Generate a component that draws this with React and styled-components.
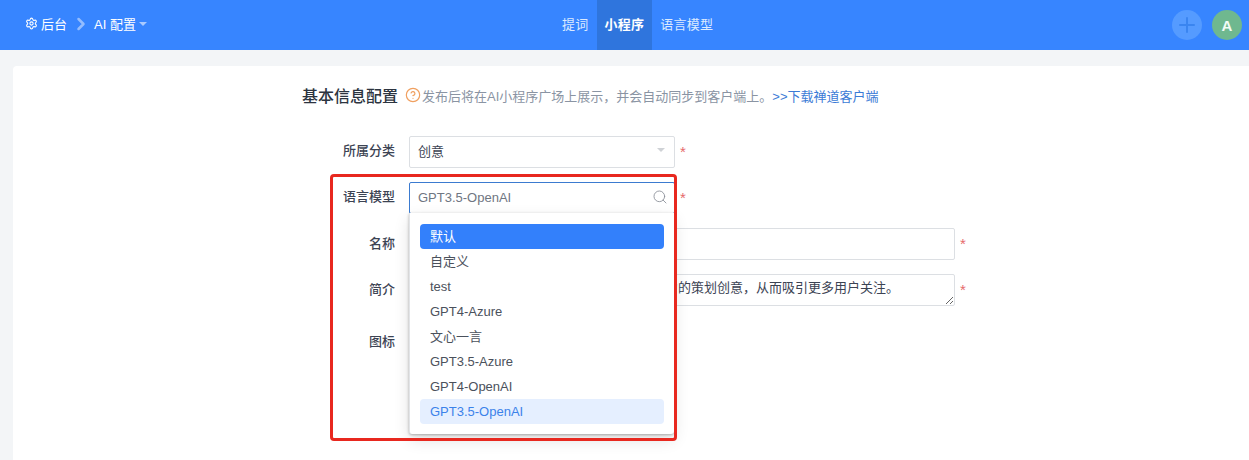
import React from "react";
import styled, { createGlobalStyle } from "styled-components";
import { Settings, ChevronRight, Plus, Search, CircleHelp } from "lucide-react";

const GlobalStyle = createGlobalStyle`
  html, body {
    margin: 0;
    padding: 0;
    height: 460px;
    overflow: hidden;
    background: #f3f5f7;
    font-family: "Liberation Sans", "Noto Sans CJK SC", sans-serif;
    font-size: 13px;
    color: #3c4353;
  }
  * { box-sizing: border-box; }
`;

const Page = styled.div`
  width: 1249px;
  height: 460px;
  overflow: hidden;
`;

const Header = styled.header`
  height: 50px;
  background: #3785ff;
  display: flex;
  align-items: stretch;
  color: #fff;
  padding: 0 7px 0 25px;
`;

const Crumbs = styled.div`
  flex: 0 0 529px;
  display: flex;
  align-items: center;
  padding-bottom: 3px;
  font-size: 13px;
`;

const Crumb = styled.span`
  display: flex;
  align-items: center;
  gap: 3px;
`;

const CrumbSep = styled.span`
  display: flex;
  margin: 0 3px 0 4px;
  color: #94bdff;
`;

const Caret = styled.i`
  display: inline-block;
  border-left: 4px solid transparent;
  border-right: 4px solid transparent;
  border-top: 4px solid #a9caff;
`;

const Nav = styled.nav`
  display: flex;
  align-items: stretch;
  flex: 1;
`;

const NavItem = styled.a`
  display: flex;
  align-items: center;
  padding: 0 8px 3px;
  letter-spacing: 0.25px;
  font-weight: ${(p) => (p.$active ? 700 : 400)};
  color: ${(p) => (p.$active ? "#fff" : "#dceaff")};
  background: ${(p) => (p.$active ? "#2f75dd" : "transparent")};
`;

const Actions = styled.div`
  display: flex;
  align-items: center;
  gap: 10px;
`;

const RoundButton = styled.span`
  width: 30px;
  height: 30px;
  border-radius: 50%;
  display: flex;
  align-items: center;
  justify-content: center;
  background: ${(p) => p.$bg};
  color: ${(p) => p.$color};
  font-size: 15px;
  font-weight: 700;
`;

const Card = styled.main`
  margin: 16px 0 0 13px;
  width: 1300px;
  height: 420px;
  background: #fff;
  border-radius: 4px;
  padding: 20px 0 0 289px;
`;

const TitleRow = styled.div`
  display: flex;
  align-items: center;
  height: 20px;
  margin-bottom: 30px;
`;

const Title = styled.h2`
  margin: 2px 7px 0 0;
  font-size: 16px;
  line-height: 20px;
  font-weight: 500;
  color: #2c3440;
`;

const Hint = styled.span`
  display: flex;
  align-items: center;
  gap: 1px;
  padding-bottom: 2px;
  color: #8a94a3;
`;

const HintLink = styled.a`
  margin-left: -1px;
  color: #3b7bd6;
`;

const Form = styled.div`
  display: flex;
  flex-direction: column;
  gap: 14px;
`;

const Row = styled.div`
  display: flex;
  align-items: flex-start;
`;

const Label = styled.label`
  flex: 0 0 93px;
  margin-right: 14px;
  text-align: right;
  line-height: ${(p) => p.$line || 30}px;
  font-weight: 500;
  color: #3c4353;
`;

const Control = styled.div`
  position: relative;
  width: ${(p) => p.$width}px;
`;

const Field = styled.div`
  height: 32px;
  border: 1px solid ${(p) => (p.$focus ? "#3b7bd0" : "#dcdfe3")};
  border-radius: 2px;
  padding: 0 8px ${(p) => (p.$focus ? 2 : 4)}px;
  display: flex;
  align-items: center;
  justify-content: space-between;
  background: #fff;
  color: ${(p) => (p.$focus ? "#6f7682" : "#3c4353")};
`;

const SelectArrow = styled.i`
  margin-right: 1px;
  border-left: 4px solid transparent;
  border-right: 4px solid transparent;
  border-top: 4px solid #cfd2d6;
`;

const SearchIcon = styled(Search)`
  margin-right: -2px;
`;

const NameInput = styled.input`
  display: block;
  width: 100%;
  height: 32px;
  border: 1px solid #dcdfe3;
  border-radius: 2px;
  outline: none;
`;

const Description = styled.textarea`
  display: block;
  width: 100%;
  height: 32px;
  padding: 3px 8px;
  border: 1px solid #dcdfe3;
  border-radius: 2px;
  outline: none;
  resize: vertical;
  overflow: hidden;
  font: inherit;
  line-height: 20px;
  color: #3c4353;
`;

const IconTile = styled.div`
  width: 48px;
  height: 48px;
  border-radius: 4px;
  background: #c9ccd1;
`;

const Star = styled.span`
  margin-left: 5px;
  color: #e66a6a;
  font-size: 15px;
  line-height: 32px;
`;

const Dropdown = styled.ul`
  position: absolute;
  z-index: 2;
  top: 31px;
  left: 0;
  width: 265px;
  margin: 0;
  padding: 11px 10px 10px 10px;
  list-style: none;
  background: #fff;
  border-radius: 0 0 3px 3px;
  border-left: 1px solid #e2e4e7;
  box-shadow: 0 1px 3px rgba(0, 0, 0, 0.3), 0 6px 16px rgba(0, 0, 0, 0.12);
`;

const Option = styled.li`
  height: 25px;
  line-height: 25px;
  padding: 0 10px;
  border-radius: 4px;
  color: ${(p) => (p.$active ? "#fff" : p.$selected ? "#3b82ea" : "#4b515c")};
  background: ${(p) => (p.$active ? "#3380fb" : p.$selected ? "#e5efff" : "transparent")};
`;

const Highlight = styled.div`
  position: absolute;
  z-index: 3;
  left: -79px;
  top: -8px;
  width: 347px;
  height: 267px;
  border: 3px solid #e8281f;
  border-radius: 4px;
  pointer-events: none;
`;

const models = ["默认", "自定义", "test", "GPT4-Azure", "文心一言", "GPT3.5-Azure", "GPT4-OpenAI", "GPT3.5-OpenAI"];

export default function App() {
  return (
    <Page>
      <GlobalStyle />
      <Header>
        <Crumbs>
          <Crumb>
            <Settings size={13} strokeWidth={2} />
            后台
          </Crumb>
          <CrumbSep>
            <ChevronRight size={20} strokeWidth={3} />
          </CrumbSep>
          <Crumb>
            AI 配置
            <Caret />
          </Crumb>
        </Crumbs>
        <Nav>
          <NavItem>提词</NavItem>
          <NavItem $active>小程序</NavItem>
          <NavItem>语言模型</NavItem>
        </Nav>
        <Actions>
          <RoundButton $bg="#559bff" $color="#3a85f0">
            <Plus size={24} strokeWidth={2} />
          </RoundButton>
          <RoundButton $bg="#6fb88f" $color="#f2fbf5">A</RoundButton>
        </Actions>
      </Header>
      <Card>
        <TitleRow>
          <Title>基本信息配置</Title>
          <Hint>
            <CircleHelp size={16} color="#f0a060" strokeWidth={1.8} />
            发布后将在AI小程序广场上展示，并会自动同步到客户端上。
            <HintLink>&gt;&gt;下载禅道客户端</HintLink>
          </Hint>
        </TitleRow>
        <Form>
          <Row>
            <Label>所属分类</Label>
            <Control $width={266}>
              <Field>
                创意
                <SelectArrow />
              </Field>
            </Control>
            <Star>*</Star>
          </Row>
          <Row>
            <Label>语言模型</Label>
            <Control $width={266}>
              <Field $focus>
                GPT3.5-OpenAI
                <SearchIcon size={16} color="#8a8f98" strokeWidth={1.3} />
              </Field>
              <Dropdown>
                {models.map((name, i) => (
                  <Option key={name} $active={i === 0} $selected={i === models.length - 1}>
                    {name}
                  </Option>
                ))}
              </Dropdown>
              <Highlight />
            </Control>
            <Star>*</Star>
          </Row>
          <Row>
            <Label $line={32}>名称</Label>
            <Control $width={546}>
              <NameInput readOnly />
            </Control>
            <Star>*</Star>
          </Row>
          <Row>
            <Label $line={32}>简介</Label>
            <Control $width={546}>
              <Description readOnly defaultValue="为你的产品和活动提供更加新颖、更有吸引力的策划创意，从而吸引更多用户关注。" />
            </Control>
            <Star>*</Star>
          </Row>
          <Row>
            <Label $line={44}>图标</Label>
            <Control $width={48}>
              <IconTile />
            </Control>
          </Row>
        </Form>
      </Card>
    </Page>
  );
}
